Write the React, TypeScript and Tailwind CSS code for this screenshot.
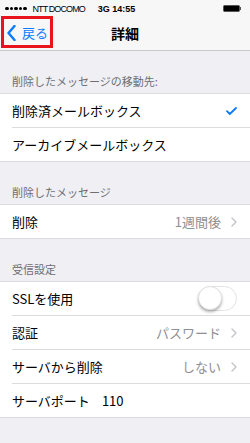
import React from "react";

const jp = { fontFamily: '"Noto Sans CJK JP", "Noto Sans", sans-serif' };

function Chevron() {
  return (
    <svg width="6" height="10" viewBox="0 0 6 10" className="ml-[10px] shrink-0">
      <path d="M1 1 L5 5 L1 9" fill="none" stroke="#c4c4c9" strokeWidth="1.4" strokeLinecap="round" strokeLinejoin="round" />
    </svg>
  );
}

function Row({ children, last }: { children: React.ReactNode; last?: boolean }) {
  return (
    <div className="pl-[12px]">
      <div className={`flex items-center pr-[13px] ${last ? "h-[33px]" : "h-[34px] border-b border-[#dcdce0]"}`}>{children}</div>
    </div>
  );
}

function Header({ children }: { children: React.ReactNode }) {
  return (
    <div className="pl-[12px] pt-[23px] pb-[5px] text-[11px] leading-[14px] text-[#6d6d72]">{children}</div>
  );
}

export default function App() {
  return (
    <div className="relative w-[250px] h-[443px] overflow-hidden bg-[#efeff4] text-black" style={jp}>
      {/* status bar */}
      <div className="bg-[#f7f7f7]">
        <div className="h-[15px] flex items-center px-[5px] pt-[2px]">
          <div className="flex gap-[1px] mr-[6px]">
            {[0, 1, 2, 3, 4].map((i) => (
              <div key={i} className="w-[3.5px] h-[3.5px] rounded-full bg-black" />
            ))}
          </div>
          <span className="text-[9px] leading-[10px] tracking-[-0.9px]" style={{ fontFamily: '"Liberation Sans", Arial, sans-serif' }}>
            NTT DOCOMO
          </span>
          <span className="ml-[13px] text-[9px] leading-[10px] font-bold" style={{ fontFamily: '"Liberation Sans", Arial, sans-serif' }}>
            3G 14:55
          </span>
          <div className="ml-auto flex items-center mr-[4px]">
            <div className="w-[17px] h-[7px] bg-black rounded-[1.5px] border border-[#555]" />
            <div className="w-[1.5px] h-[3px] bg-[#555]" />
          </div>
        </div>
        {/* nav bar */}
        <div className="h-[36px] border-b border-[#c8c7cc] flex items-center relative">
          <div className="flex items-center pl-[7px]">
            <svg width="9" height="16" viewBox="0 0 9 16">
              <path d="M7.5 1 L1.5 8 L7.5 15" fill="none" stroke="#0a7bff" strokeWidth="2.4" strokeLinecap="round" strokeLinejoin="round" />
            </svg>
            <span className="ml-[6px] text-[13px] text-[#0a7bff] leading-[16px]">戻る</span>
          </div>
          <div className="absolute inset-0 flex items-center justify-center text-[14px] font-bold leading-[16px]">詳細</div>
        </div>
      </div>

      <Header>削除したメッセージの移動先:</Header>
      <div className="bg-white border-y border-[#dcdce0] text-[13px]">
        <Row>
          <span className="flex-1">削除済メールボックス</span>
          <svg width="11" height="8" viewBox="0 0 11 8" className="shrink-0">
            <path d="M1 4.2 L3.8 7 L10 1" fill="none" stroke="#0a7bff" strokeWidth="1.8" strokeLinecap="round" strokeLinejoin="round" />
          </svg>
        </Row>
        <Row last>
          <span>アーカイブメールボックス</span>
        </Row>
      </div>

      <Header>削除したメッセージ</Header>
      <div className="bg-white border-y border-[#dcdce0] text-[13px]">
        <Row last>
          <span className="flex-1">削除</span>
          <span className="text-[#8e8e93]">1週間後</span>
          <Chevron />
        </Row>
      </div>

      <Header>受信設定</Header>
      <div className="bg-white border-y border-[#dcdce0] text-[13px]">
        <Row>
          <span className="flex-1">SSLを使用</span>
          <div className="w-[39px] h-[25px] rounded-full border-[1.5px] border-[#e3e3e6] bg-white relative">
            <div className="absolute left-[-1px] top-[-1px] w-[24px] h-[24px] rounded-full bg-white shadow-[0_2px_3px_rgba(0,0,0,0.3)] border border-[#e0e0e0]" />
          </div>
        </Row>
        <Row>
          <span className="flex-1">認証</span>
          <span className="text-[#8e8e93]">パスワード</span>
          <Chevron />
        </Row>
        <Row>
          <span className="flex-1">サーバから削除</span>
          <span className="text-[#8e8e93]">しない</span>
          <Chevron />
        </Row>
        <Row last>
          <span>サーバポート</span>
          <span className="ml-[12px]">110</span>
        </Row>
      </div>

      {/* red annotation box */}
      <div className="absolute left-[1px] top-[16px] w-[52px] h-[32px] border-[3px] border-[#e8141c]" />
    </div>
  );
}
